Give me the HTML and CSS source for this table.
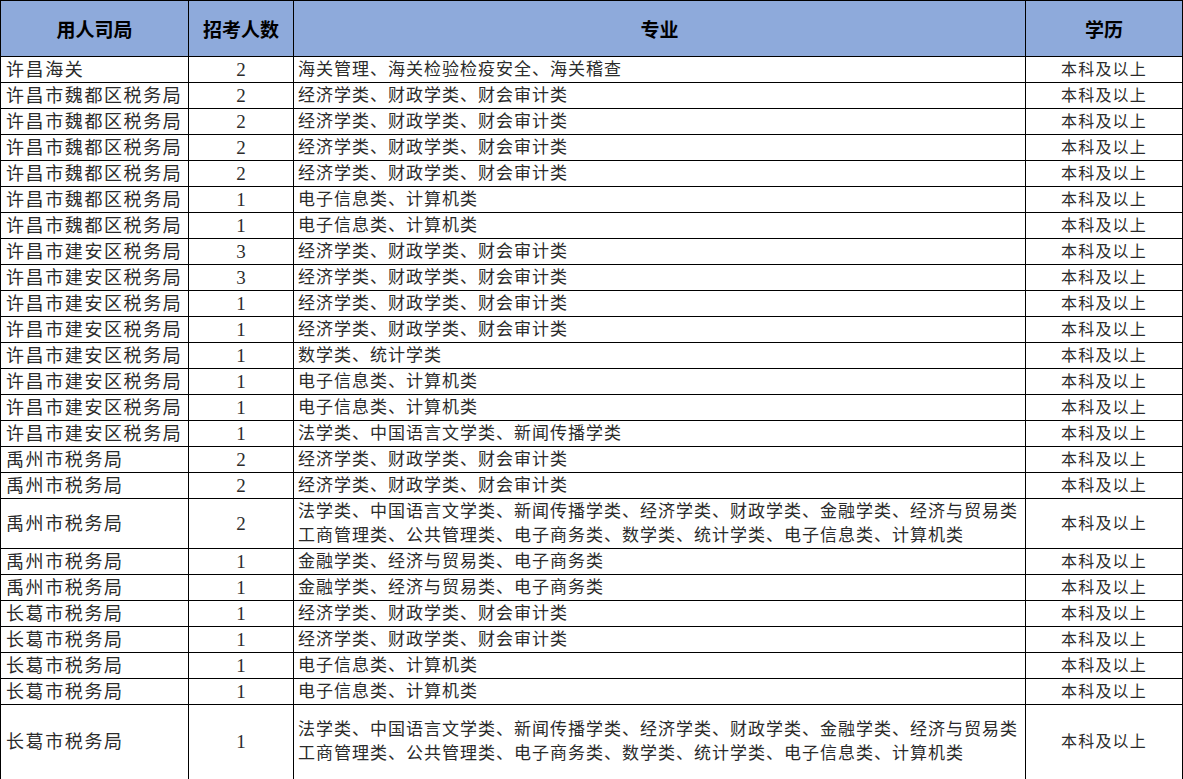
FILE: index.html
```html
<!DOCTYPE html>
<html lang="zh">
<head>
<meta charset="utf-8">
<title>招考表</title>
<link rel="stylesheet" href="styles.css">
</head>
<body>
<table class="grid">
<colgroup>
<col class="c1"><col class="c2"><col class="c3"><col class="c4">
</colgroup>
<thead>
<tr class="head"><th>用人司局</th><th>招考人数</th><th>专业</th><th>学历</th></tr>
</thead>
<tbody>
<tr><td class="org">许昌海关</td><td class="num">2</td><td class="major">海关管理、海关检验检疫安全、海关稽查</td><td class="edu">本科及以上</td></tr>
<tr><td class="org">许昌市魏都区税务局</td><td class="num">2</td><td class="major">经济学类、财政学类、财会审计类</td><td class="edu">本科及以上</td></tr>
<tr><td class="org">许昌市魏都区税务局</td><td class="num">2</td><td class="major">经济学类、财政学类、财会审计类</td><td class="edu">本科及以上</td></tr>
<tr><td class="org">许昌市魏都区税务局</td><td class="num">2</td><td class="major">经济学类、财政学类、财会审计类</td><td class="edu">本科及以上</td></tr>
<tr><td class="org">许昌市魏都区税务局</td><td class="num">2</td><td class="major">经济学类、财政学类、财会审计类</td><td class="edu">本科及以上</td></tr>
<tr><td class="org">许昌市魏都区税务局</td><td class="num">1</td><td class="major">电子信息类、计算机类</td><td class="edu">本科及以上</td></tr>
<tr><td class="org">许昌市魏都区税务局</td><td class="num">1</td><td class="major">电子信息类、计算机类</td><td class="edu">本科及以上</td></tr>
<tr><td class="org">许昌市建安区税务局</td><td class="num">3</td><td class="major">经济学类、财政学类、财会审计类</td><td class="edu">本科及以上</td></tr>
<tr><td class="org">许昌市建安区税务局</td><td class="num">3</td><td class="major">经济学类、财政学类、财会审计类</td><td class="edu">本科及以上</td></tr>
<tr><td class="org">许昌市建安区税务局</td><td class="num">1</td><td class="major">经济学类、财政学类、财会审计类</td><td class="edu">本科及以上</td></tr>
<tr><td class="org">许昌市建安区税务局</td><td class="num">1</td><td class="major">经济学类、财政学类、财会审计类</td><td class="edu">本科及以上</td></tr>
<tr><td class="org">许昌市建安区税务局</td><td class="num">1</td><td class="major">数学类、统计学类</td><td class="edu">本科及以上</td></tr>
<tr><td class="org">许昌市建安区税务局</td><td class="num">1</td><td class="major">电子信息类、计算机类</td><td class="edu">本科及以上</td></tr>
<tr><td class="org">许昌市建安区税务局</td><td class="num">1</td><td class="major">电子信息类、计算机类</td><td class="edu">本科及以上</td></tr>
<tr><td class="org">许昌市建安区税务局</td><td class="num">1</td><td class="major">法学类、中国语言文学类、新闻传播学类</td><td class="edu">本科及以上</td></tr>
<tr><td class="org">禹州市税务局</td><td class="num">2</td><td class="major">经济学类、财政学类、财会审计类</td><td class="edu">本科及以上</td></tr>
<tr><td class="org">禹州市税务局</td><td class="num">2</td><td class="major">经济学类、财政学类、财会审计类</td><td class="edu">本科及以上</td></tr>
<tr class="tall"><td class="org">禹州市税务局</td><td class="num">2</td><td class="major">法学类、中国语言文学类、新闻传播学类、经济学类、财政学类、金融学类、经济与贸易类<br>工商管理类、公共管理类、电子商务类、数学类、统计学类、电子信息类、计算机类</td><td class="edu">本科及以上</td></tr>
<tr><td class="org">禹州市税务局</td><td class="num">1</td><td class="major">金融学类、经济与贸易类、电子商务类</td><td class="edu">本科及以上</td></tr>
<tr><td class="org">禹州市税务局</td><td class="num">1</td><td class="major">金融学类、经济与贸易类、电子商务类</td><td class="edu">本科及以上</td></tr>
<tr><td class="org">长葛市税务局</td><td class="num">1</td><td class="major">经济学类、财政学类、财会审计类</td><td class="edu">本科及以上</td></tr>
<tr><td class="org">长葛市税务局</td><td class="num">1</td><td class="major">经济学类、财政学类、财会审计类</td><td class="edu">本科及以上</td></tr>
<tr><td class="org">长葛市税务局</td><td class="num">1</td><td class="major">电子信息类、计算机类</td><td class="edu">本科及以上</td></tr>
<tr><td class="org">长葛市税务局</td><td class="num">1</td><td class="major">电子信息类、计算机类</td><td class="edu">本科及以上</td></tr>
<tr class="taller"><td class="org">长葛市税务局</td><td class="num">1</td><td class="major">法学类、中国语言文学类、新闻传播学类、经济学类、财政学类、金融学类、经济与贸易类<br>工商管理类、公共管理类、电子商务类、数学类、统计学类、电子信息类、计算机类</td><td class="edu">本科及以上</td></tr>
</tbody>
</table>
</body>
</html>
```
FILE: styles.css
```css
html, body {
  margin: 0;
  padding: 0;
  background: #ffffff;
}

.grid {
  border-collapse: collapse;
  table-layout: fixed;
  width: 1182px;
  font-family: "Liberation Serif", "Noto Sans CJK SC", serif;
  color: #2b2b2b;
}

.c1 { width: 188px; }
.c2 { width: 105px; }
.c3 { width: 732px; }
.c4 { width: 157px; }

.grid th,
.grid td {
  border: 1px solid #000;
  padding: 0;
  overflow: hidden;
  white-space: nowrap;
}

.head {
  height: 56px;
  background: #8eaadb;
}

.head th {
  font-family: "Noto Sans CJK SC", "Liberation Sans", sans-serif;
  font-weight: 700;
  font-size: 19px;
  color: #000;
  text-align: center;
  vertical-align: middle;
}

.grid tbody tr {
  height: 26px;
}

.grid tbody tr.tall {
  height: 50px;
}

.grid tbody tr.taller {
  height: 75px;
}

.grid tbody tr:last-child td {
  border-bottom-width: 2px;
}

.org {
  font-size: 18px;
  letter-spacing: 1.6px;
  padding-left: 5px !important;
  line-height: 24px;
}

.num {
  text-align: center;
  font-size: 19px;
  line-height: 24px;
}

.major {
  font-size: 17px;
  letter-spacing: 1px;
  padding-left: 4px !important;
  line-height: 24px;
}

.edu {
  text-align: center;
  font-size: 16px;
  letter-spacing: 1.2px;
  line-height: 24px;
}
```
